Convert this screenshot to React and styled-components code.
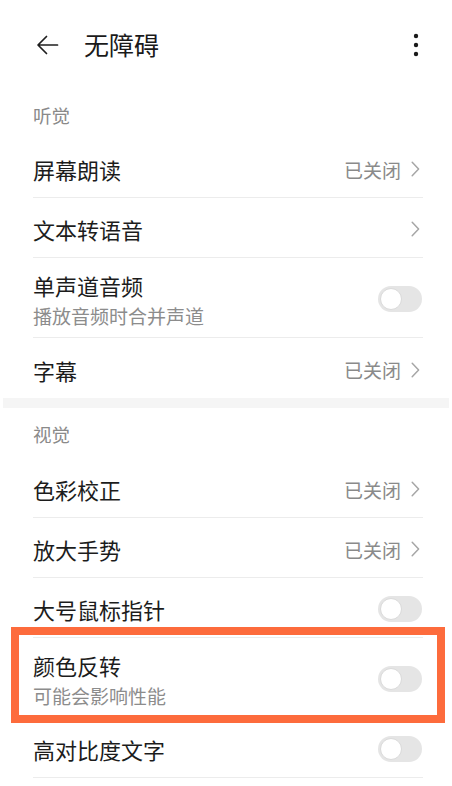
import React from "react";
import styled, { createGlobalStyle } from "styled-components";

const GlobalStyle = createGlobalStyle`
  html, body {
    margin: 0;
    padding: 0;
    background: #ffffff;
  }
  body {
    font-family: "Noto Sans CJK SC", "Noto Sans", sans-serif;
    color: #1c1c1c;
  }
`;

const Page = styled.div`
  width: 452px;
  min-height: 786px;
  background: #fff;
  overflow: hidden;
`;

const Header = styled.div`
  height: 90px;
  display: flex;
  align-items: center;
  padding: 0 33px 0 36px;
`;

const Title = styled.div`
  flex: 1;
  margin-left: 25px;
  font-size: 25px;
  font-weight: 400;
  color: #1a1a1a;
  line-height: 34px;
  margin-top: -2px;
`;

const IconButton = styled.div`
  display: flex;
  align-items: center;
  justify-content: center;
`;

const SectionTitle = styled.div`
  height: ${props => props.height}px;
  box-sizing: border-box;
  padding: ${props => props.top}px 33px 0;
  font-size: 18.5px;
  line-height: 26px;
  color: #8a8a8a;
`;

const Divider = styled.div`
  height: 10px;
  background: #f5f5f5;
  margin: 0 3px;
`;

const List = styled.div`
  padding: 0 29px 0 33px;
`;

const RowWrap = styled.div`
  position: relative;
`;

const Row = styled.div`
  height: ${props => (props.tall ? 80 : 60)}px;
  box-sizing: border-box;
  display: flex;
  align-items: center;
  border-bottom: ${props => (props.last ? "none" : "1.5px solid #ececec")};
  padding-top: 3px;
`;

const Texts = styled.div`
  flex: 1;
  display: flex;
  flex-direction: column;
  gap: 3px;
`;

const RowTitle = styled.div`
  font-size: 22px;
  line-height: 30px;
  color: #1c1c1c;
`;

const RowSub = styled.div`
  font-size: 19px;
  line-height: 26px;
  color: #8c8c8c;
`;

const Value = styled.div`
  display: flex;
  align-items: center;
  gap: 10px;
  font-size: 19px;
  color: #8a8a8a;
  padding-right: 3px;
`;

const Track = styled.div`
  width: 44px;
  height: 26px;
  border-radius: 13px;
  background: #e5e5e5;
  box-sizing: border-box;
  padding: 2px;
  display: flex;
  align-items: center;
  margin-right: 1px;
`;

const Knob = styled.div`
  width: 22px;
  height: 22px;
  border-radius: 50%;
  background: #fff;
  box-sizing: border-box;
  border: 1.5px solid #dadada;
`;

const Highlight = styled.div`
  position: absolute;
  left: -22px;
  right: -22px;
  top: -11px;
  bottom: -5px;
  border: 8.5px solid #fd6b3c;
  pointer-events: none;
`;

const Chevron = () => (
  <svg width="9" height="16" viewBox="0 0 9 16">
    <polyline
      points="1.2,1.2 7.6,8 1.2,14.8"
      fill="none"
      stroke="#a6a6a6"
      strokeWidth="1.5"
      strokeLinecap="round"
      strokeLinejoin="round"
    />
  </svg>
);

const Switch = () => (
  <Track>
    <Knob />
  </Track>
);

const SettingRow = ({ item }) => (
  <RowWrap>
    <Row tall={!!item.sub} last={item.last}>
      <Texts>
        <RowTitle>{item.title}</RowTitle>
        {item.sub ? <RowSub>{item.sub}</RowSub> : null}
      </Texts>
      {item.toggle ? (
        <Switch />
      ) : (
        <Value>
          {item.value}
          <Chevron />
        </Value>
      )}
    </Row>
    {item.highlight ? <Highlight /> : null}
  </RowWrap>
);

const hearing = [
  { title: "屏幕朗读", value: "已关闭" },
  { title: "文本转语音", value: "" },
  { title: "单声道音频", sub: "播放音频时合并声道", toggle: true },
  { title: "字幕", value: "已关闭", last: true }
];

const vision = [
  { title: "色彩校正", value: "已关闭" },
  { title: "放大手势", value: "已关闭" },
  { title: "大号鼠标指针", toggle: true },
  { title: "颜色反转", sub: "可能会影响性能", toggle: true, highlight: true },
  { title: "高对比度文字", toggle: true }
];

export default function App() {
  return (
    <Page>
      <GlobalStyle />
      <Header>
        <IconButton>
          <svg width="23" height="20" viewBox="0 0 23 20">
            <path
              d="M21.5 10H2.2M10.5 1.5L2 10l8.5 8.5"
              fill="none"
              stroke="#1f1f1f"
              strokeWidth="1.7"
              strokeLinecap="round"
              strokeLinejoin="round"
            />
          </svg>
        </IconButton>
        <Title>无障碍</Title>
        <IconButton>
          <svg width="6" height="24" viewBox="0 0 6 24">
            <circle cx="3" cy="3" r="2.2" fill="#1a1a1a" />
            <circle cx="3" cy="12" r="2.2" fill="#1a1a1a" />
            <circle cx="3" cy="21" r="2.2" fill="#1a1a1a" />
          </svg>
        </IconButton>
      </Header>

      <SectionTitle height={48} top={12}>听觉</SectionTitle>
      <List>
        {hearing.map(item => (
          <SettingRow key={item.title} item={item} />
        ))}
      </List>

      <Divider />

      <SectionTitle height={50} top={13}>视觉</SectionTitle>
      <List>
        {vision.map(item => (
          <SettingRow key={item.title} item={item} />
        ))}
      </List>
    </Page>
  );
}
